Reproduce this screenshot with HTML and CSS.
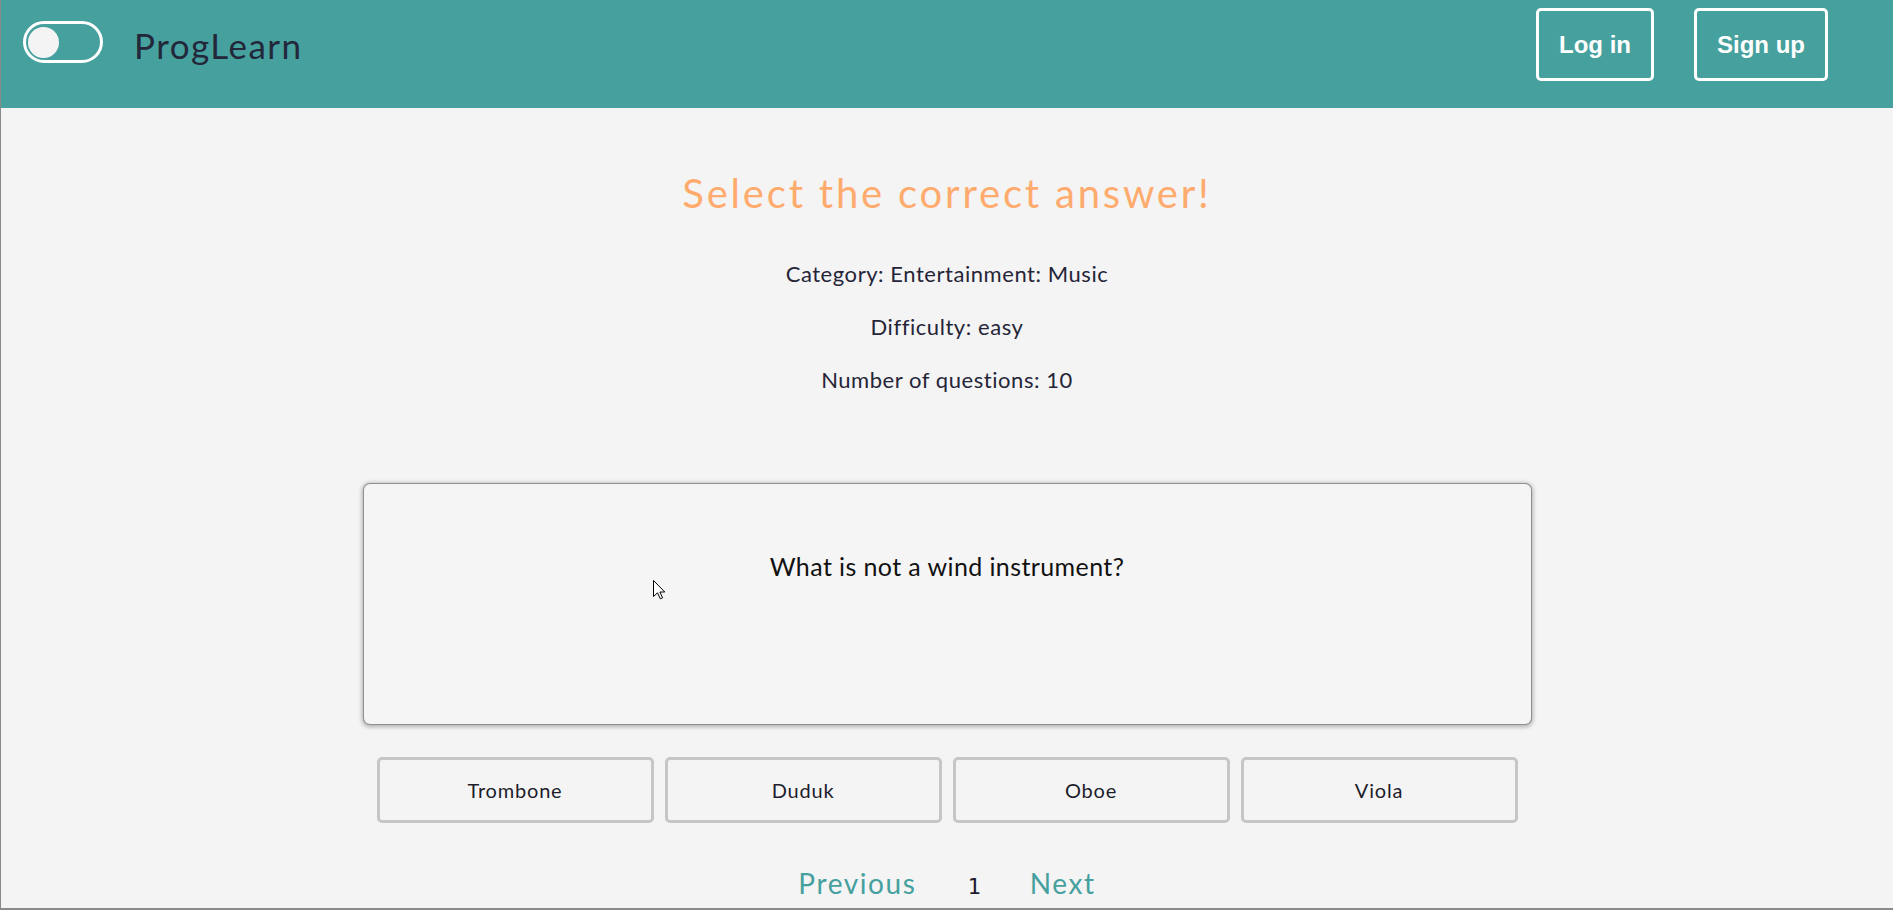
FILE: index.html
```html
<!DOCTYPE html>
<html lang="en">
<head>
<meta charset="utf-8">
<title>ProgLearn</title>
<link rel="stylesheet" href="styles.css">
</head>
<body>
<header class="topbar">
  <div class="brand">
    <span class="toggle"><span class="knob"></span></span>
    <span class="logo">ProgLearn</span>
  </div>
  <nav class="auth">
    <button class="auth-btn">Log in</button>
    <button class="auth-btn">Sign up</button>
  </nav>
</header>
<main class="quiz">
  <section class="info">
    <h1 class="title">Select the correct answer!</h1>
    <p class="meta">Category: Entertainment: Music</p>
    <p class="meta">Difficulty: easy</p>
    <p class="meta">Number of questions: 10</p>
  </section>
  <div class="card">
    <p class="question">What is not a wind instrument?</p>
  </div>
  <div class="answers">
    <button class="answer">Trombone</button>
    <button class="answer">Duduk</button>
    <button class="answer">Oboe</button>
    <button class="answer">Viola</button>
  </div>
  <div class="pager">
    <a class="pager-link">Previous</a>
    <span class="pager-num">1</span>
    <a class="pager-link">Next</a>
  </div>
</main>
<svg class="cursor" width="13" height="20" viewBox="0 0 13 20"><path d="M0.5 0.5 L0.5 16.5 L4.5 12.8 L7.3 18.8 L9.6 17.8 L6.9 12 L11.8 12 Z" fill="#fff" stroke="#000" stroke-width="1" stroke-linejoin="miter"/></svg>
</body>
</html>
```
FILE: styles.css
```css
* { box-sizing: border-box; }
html, body { margin: 0; padding: 0; }
body {
  background: #f4f4f4;
  font-family: Lato, "Noto Sans", sans-serif;
  color: #252538;
  height: 910px;
  overflow: hidden;
  border-left: 1px solid #8a8a8a;
  border-bottom: 2px solid #8a8a8a;
  position: relative;
}
.topbar {
  height: 108px;
  background: #46a19e;
  display: flex;
  justify-content: space-between;
  align-items: flex-start;
  padding: 8px 65px 0 22px;
}
.brand {
  display: flex;
  align-items: center;
  height: 73px;
  gap: 31px;
}
.toggle {
  width: 80px;
  height: 42px;
  border: 3px solid #fff;
  border-radius: 21px;
  display: flex;
  align-items: center;
  padding-left: 2px;
  margin-top: -5px;
}
.knob {
  width: 31px;
  height: 31px;
  border-radius: 50%;
  background: #f4f4f4;
}
.logo {
  font-size: 35px;
  color: #23273a;
  letter-spacing: 1.5px;
}
.auth { display: flex; gap: 40px; }
.auth-btn {
  height: 73px;
  border: 3px solid #fff;
  border-radius: 5px;
  background: transparent;
  color: #fff;
  font-family: "Liberation Sans", Arial, sans-serif;
  font-weight: bold;
  font-size: 24px;
  padding: 0 20px;
}
.quiz {
  display: flex;
  flex-direction: column;
  align-items: center;
}
.info {
  text-align: center;
  padding-top: 61px;
}
.title {
  margin: 0 0 30px;
  font-size: 40px;
  line-height: 48px;
  font-weight: 400;
  letter-spacing: 2.8px;
  color: #ffab6e;
}
.meta {
  margin: 0;
  font-size: 22px;
  line-height: 53px;
  letter-spacing: 0.55px;
}
.card {
  margin-top: 78px;
  width: 1167px;
  height: 240px;
  background: #f5f5f5;
  border-radius: 6px;
  box-shadow: 0 0 0 1px #8f8f8f, 0 1px 4px 2px rgba(0,0,0,0.28);
  padding-top: 67px;
  text-align: center;
}
.question {
  margin: 0;
  font-size: 25px;
  line-height: 30px;
  letter-spacing: 0.4px;
  color: #111;
}
.answers {
  display: flex;
  gap: 11px;
  margin-top: 33px;
}
.answer {
  width: 277px;
  height: 66px;
  border: 3px solid #c6c6c6;
  border-radius: 5px;
  background: #f4f4f4;
  font-family: Lato, "Noto Sans", sans-serif;
  font-size: 20px;
  letter-spacing: 0.8px;
  color: #1d1d2b;
}
.pager {
  display: flex;
  align-items: baseline;
  margin-top: 43px;
}
.pager-link {
  font-size: 28px;
  line-height: 34px;
  letter-spacing: 1.6px;
  color: #45a09e;
}
.pager-num {
  font-family: "DejaVu Sans Mono", monospace;
  font-size: 22px;
  margin: 0 49px 0 51px;
  color: #1d1d2b;
}
.cursor {
  position: absolute;
  left: 652px;
  top: 580px;
}
```
